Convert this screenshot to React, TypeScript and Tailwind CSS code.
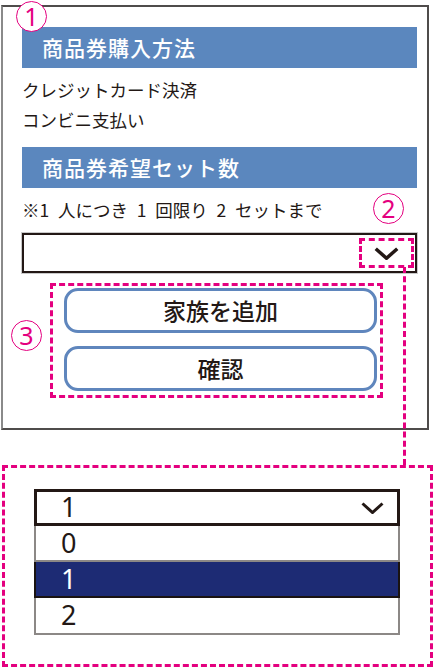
const jp = { fontFamily: '"Noto Sans CJK JP", "Noto Sans", sans-serif' };

// Circled annotation marker (①②③)
function Marker({ n, className }: { n: string; className: string }) {
  return (
    <div
      className={`absolute flex h-[31px] w-[31px] items-center justify-center rounded-full border-[1.5px] border-[#e4007f] bg-white text-[25px] leading-none text-[#e4007f] ${className}`}
      style={{ fontFamily: '"Noto Sans", sans-serif' }}
    >
      {n}
    </div>
  );
}

function Chevron({ w, h, stroke }: { w: number; h: number; stroke: number }) {
  return (
    <svg width={w} height={h} viewBox={`0 0 ${w} ${h}`} fill="none">
      <polyline
        points={`${stroke / 2},${stroke / 2} ${w / 2},${h - stroke / 2} ${w - stroke / 2},${stroke / 2}`}
        stroke="#231815"
        strokeWidth={stroke}
        strokeLinejoin="miter"
      />
    </svg>
  );
}

function SectionHeader({ children }: { children: string }) {
  return (
    <div className="flex h-[41px] items-center bg-[#5b87be] pl-[20px] text-[21px] font-medium tracking-[1px] text-white">
      {children}
    </div>
  );
}

function OutlineButton({ children }: { children: string }) {
  return (
    <button className="flex h-[45px] w-full items-center justify-center rounded-[14px] border-[3px] border-[#5f86bd] bg-white text-[23px] font-medium text-[#231815]">
      {children}
    </button>
  );
}

export default function App() {
  return (
    <div className="relative h-[669px] w-[435px] overflow-hidden bg-white text-[#231815]" style={jp}>
      {/* form panel */}
      <div className="ml-[1px] mt-[5px] h-[425px] w-[428px] border-2 border-[#4f4c4b] border-l-[#8a8a8a] pl-[19px] pr-[10px] pt-[20px]">
        <SectionHeader>商品券購入方法</SectionHeader>
        <div className="mt-[7px] text-[17.5px] leading-[30px]">
          <p>クレジットカード決済</p>
          <p>コンビニ支払い</p>
        </div>
        <div className="mt-[12px]">
          <SectionHeader>商品券希望セット数</SectionHeader>
        </div>
        <p className="mt-[7px] text-[17.5px] leading-[30px]">
          {"※1\u2002人につき\u20021\u2002回限り\u20022\u2002セットまで"}
        </p>

        <div className="relative mt-[8px] h-[40px] border-2 border-[#231815] shadow-[0_0_0_1px_#c9c9c9]">
          <div className="absolute right-[1px] top-[3px] flex h-[30px] w-[55px] items-center justify-center border-[3px] border-dashed border-[#e4007f]">
            <Chevron w={25} h={13} stroke={3.5} />
          </div>
        </div>

        <div className="ml-[28px] mt-[10px] flex h-[115px] w-[333px] flex-col gap-[13px] border-[3px] border-dashed border-[#e4007f] pb-[3px] pl-[11px] pr-[3px] pt-[2px]">
          <OutlineButton>家族を追加</OutlineButton>
          <OutlineButton>確認</OutlineButton>
        </div>
      </div>

      {/* expanded dropdown */}
      <div className="ml-[2px] mt-[35px] h-[202px] w-[431px] border-[3px] border-dashed border-[#e4007f] pl-[29px] pt-[21px]">
        <div className="w-[366px]" style={{ fontFamily: '"Noto Sans", sans-serif' }}>
          <div className="flex h-[37px] items-center justify-between border-[3px] border-[#231815] pl-[24px] pr-[13px] text-[27px]">
            <span>1</span>
            <Chevron w={23} h={12} stroke={3} />
          </div>
          <div className="flex h-[36px] items-center border-x-2 border-b-2 border-[#8c8886] pl-[25px] text-[27px]">0</div>
          <div className="flex h-[36px] items-center border-x-2 border-b-2 border-[#1a1311] bg-[#1d2b74] pl-[25px] text-[27px] text-white">1</div>
          <div className="flex h-[37px] items-center border-x-2 border-b-2 border-[#8c8886] pl-[25px] text-[27px]">2</div>
        </div>
      </div>

      {/* connector from the chevron to the expanded list */}
      <div className="absolute left-[403px] top-[267px] h-[198px] border-l-[3px] border-dashed border-[#e4007f]" />

      <Marker n="1" className="left-[16px] top-[1px]" />
      <Marker n="2" className="left-[373px] top-[193px]" />
      <Marker n="3" className="left-[11px] top-[320px]" />
    </div>
  );
}
